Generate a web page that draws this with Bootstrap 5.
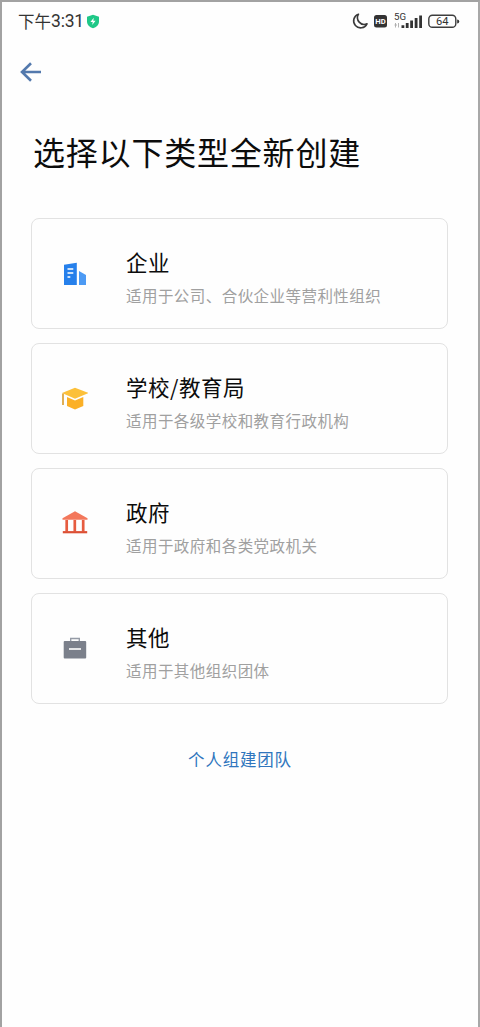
<!DOCTYPE html>
<html lang="zh-CN">
<head>
<meta charset="utf-8">
<meta name="viewport" content="width=device-width, initial-scale=1">
<title>选择以下类型全新创建</title>
<link href="https://cdn.jsdelivr.net/npm/bootstrap@5.3.0/dist/css/bootstrap.min.css" rel="stylesheet">
<style>
body{font-family:"Noto Sans CJK SC",sans-serif;background:#fefefe;color:#0c0c0c}
.screen{height:1027px;border:2px solid #a2a2a2;border-bottom:0;border-right-color:#a8a8a8}
.status-bar{height:38px;padding:0 17.5px 0 16px;color:#333}
.clock{font-size:16.5px;line-height:20px}
.clock span{font-family:Roboto,sans-serif;font-size:17.5px;letter-spacing:-.2px}
.shield{margin-left:2.5px}
.back{margin:22px 0 0 18px;width:22px;height:20px}
.page-title{font-size:32px;letter-spacing:.8px;line-height:46px;margin:46px 0 44px 31px;font-weight:400}
.types{margin:0 30px 0 29px;gap:14px}
.type-card{height:111px;border:1px solid #e2e2e2;border-radius:8px;background:#fefefe;padding-left:30px}
.type-card svg{width:26px;height:26px;margin-right:38px}
.type-text{padding-top:6px}
.type-name{font-size:21.5px;letter-spacing:.5px;line-height:30px;font-weight:400;margin:0 0 7px}
.type-desc{font-size:15.5px;letter-spacing:.45px;line-height:22px;color:#a0a0a0;margin:0}
.personal{font-size:16.5px;letter-spacing:.8px;line-height:24px;margin-top:43px;color:#2f75bd}
</style>
</head>
<body>
<main class="screen d-flex flex-column">
  <header class="status-bar d-flex align-items-center justify-content-between">
    <div class="d-flex align-items-center clock">下午<span>3:31</span>
      <svg class="shield" width="14" height="15" viewBox="0 0 14 15"><path d="M7 .8 13 2.8V7.5C13 10.8 10.5 13 7 14.3 3.5 13 1 10.8 1 7.5V2.8Z" fill="#1fc887"/><path d="M7.8 3.8 4.4 8H6.7L6.2 11 9.6 6.8H7.3Z" fill="#fff"/></svg>
    </div>
    <svg width="110" height="20" viewBox="351 11 110 20" font-family="Roboto, sans-serif" fill="#333">
      <path d="M358.5 14.2A7 7 0 1 0 367 23.8 6.7 6.7 0 0 1 358.5 14.2Z" fill="none" stroke="#3a3a3a" stroke-width="1.6" stroke-linejoin="round"/>
      <rect x="374" y="15" width="13" height="12.5" rx="2.5"/>
      <text x="375.3" y="24.3" font-size="8" font-weight="700" fill="#fff" textLength="10.4" lengthAdjust="spacingAndGlyphs">HD</text>
      <text x="394" y="20" font-size="9.2" textLength="12" lengthAdjust="spacingAndGlyphs">5G</text>
      <path d="M394.5 25H397M395.5 23V27.5M398.5 23V27.5" stroke="#aaa" stroke-width=".9"/>
      <path d="M401.5 25.3h2.8V28h-2.8ZM405.8 23h2.8V28h-2.8ZM410.2 20.5h2.8V28h-2.8ZM414.7 18h2.8V28h-2.8ZM419.2 15.5h2.8V28h-2.8Z"/>
      <rect x="428.8" y="15.3" width="27" height="12" rx="3.6" fill="none" stroke="#3d3d3d" stroke-width="1.4"/>
      <path d="M457.2 19.5q2 .2 2 2t-2 2Z"/>
      <text x="436" y="25" font-size="10.5" textLength="12.5" lengthAdjust="spacingAndGlyphs">64</text>
    </svg>
  </header>
  <svg class="back flex-shrink-0" viewBox="20 62 22 20"><path d="M41 72H22.5M31 63.3 22 72 31 80.7" fill="none" stroke="#5379ad" stroke-width="2.6"/></svg>
  <h1 class="page-title">选择以下类型全新创建</h1>
  <section class="types d-flex flex-column">
    <div class="type-card d-flex align-items-center">
      <svg viewBox="62 261 26 26"><path d="M64 264.7 76.8 262.8V285H64Z" fill="#2680eb"/><path d="M79 271 86 275V285H79Z" fill="#4c9af4"/><path d="M67.5 269H73.3M67.5 273H73.3M67.5 277H70.3" stroke="#fff" stroke-width="1.4"/></svg>
      <div class="type-text"><h2 class="type-name">企业</h2><p class="type-desc">适用于公司、合伙企业等营利性组织</p></div>
    </div>
    <div class="type-card d-flex align-items-center">
      <svg viewBox="62 386 26 26"><path d="M75 387.7 88.5 393 75 398.7 62 393Z" fill="#fcc03a"/><path d="M67 397 75 400.5 83.3 397V406L75 409.5 67 406Z" fill="#fbb026"/><path d="M63 393.5V405" stroke="#d99b2a" stroke-width="1.6"/></svg>
      <div class="type-text"><h2 class="type-name">学校/教育局</h2><p class="type-desc">适用于各级学校和教育行政机构</p></div>
    </div>
    <div class="type-card d-flex align-items-center">
      <svg viewBox="62 511 26 26"><path d="M75 511.3 87.5 518.2V519.7H62.5V518.2Z" fill="#f3775b"/><path d="M66.7 520V531.5M74.8 520V531.5M83.2 520V531.5" stroke="#e65c40" stroke-width="2.7"/><path d="M62.8 532.2H87.2" stroke="#dc4f34" stroke-width="2.2"/></svg>
      <div class="type-text"><h2 class="type-name">政府</h2><p class="type-desc">适用于政府和各类党政机关</p></div>
    </div>
    <div class="type-card d-flex align-items-center">
      <svg viewBox="62 636 26 26"><path d="M70.7 642V638.5H79.3V642" fill="none" stroke="#959ba6" stroke-width="1.4"/><rect x="63.7" y="641" width="22.5" height="17.5" rx="1" fill="#7b808b"/><path d="M69 649H81" stroke="#fff" stroke-width="1.6"/></svg>
      <div class="type-text"><h2 class="type-name">其他</h2><p class="type-desc">适用于其他组织团体</p></div>
    </div>
  </section>
  <a class="personal align-self-center text-decoration-none" href="#">个人组建团队</a>
</main>
<script src="https://cdn.jsdelivr.net/npm/bootstrap@5.3.0/dist/js/bootstrap.bundle.min.js"></script>
</body>
</html>
